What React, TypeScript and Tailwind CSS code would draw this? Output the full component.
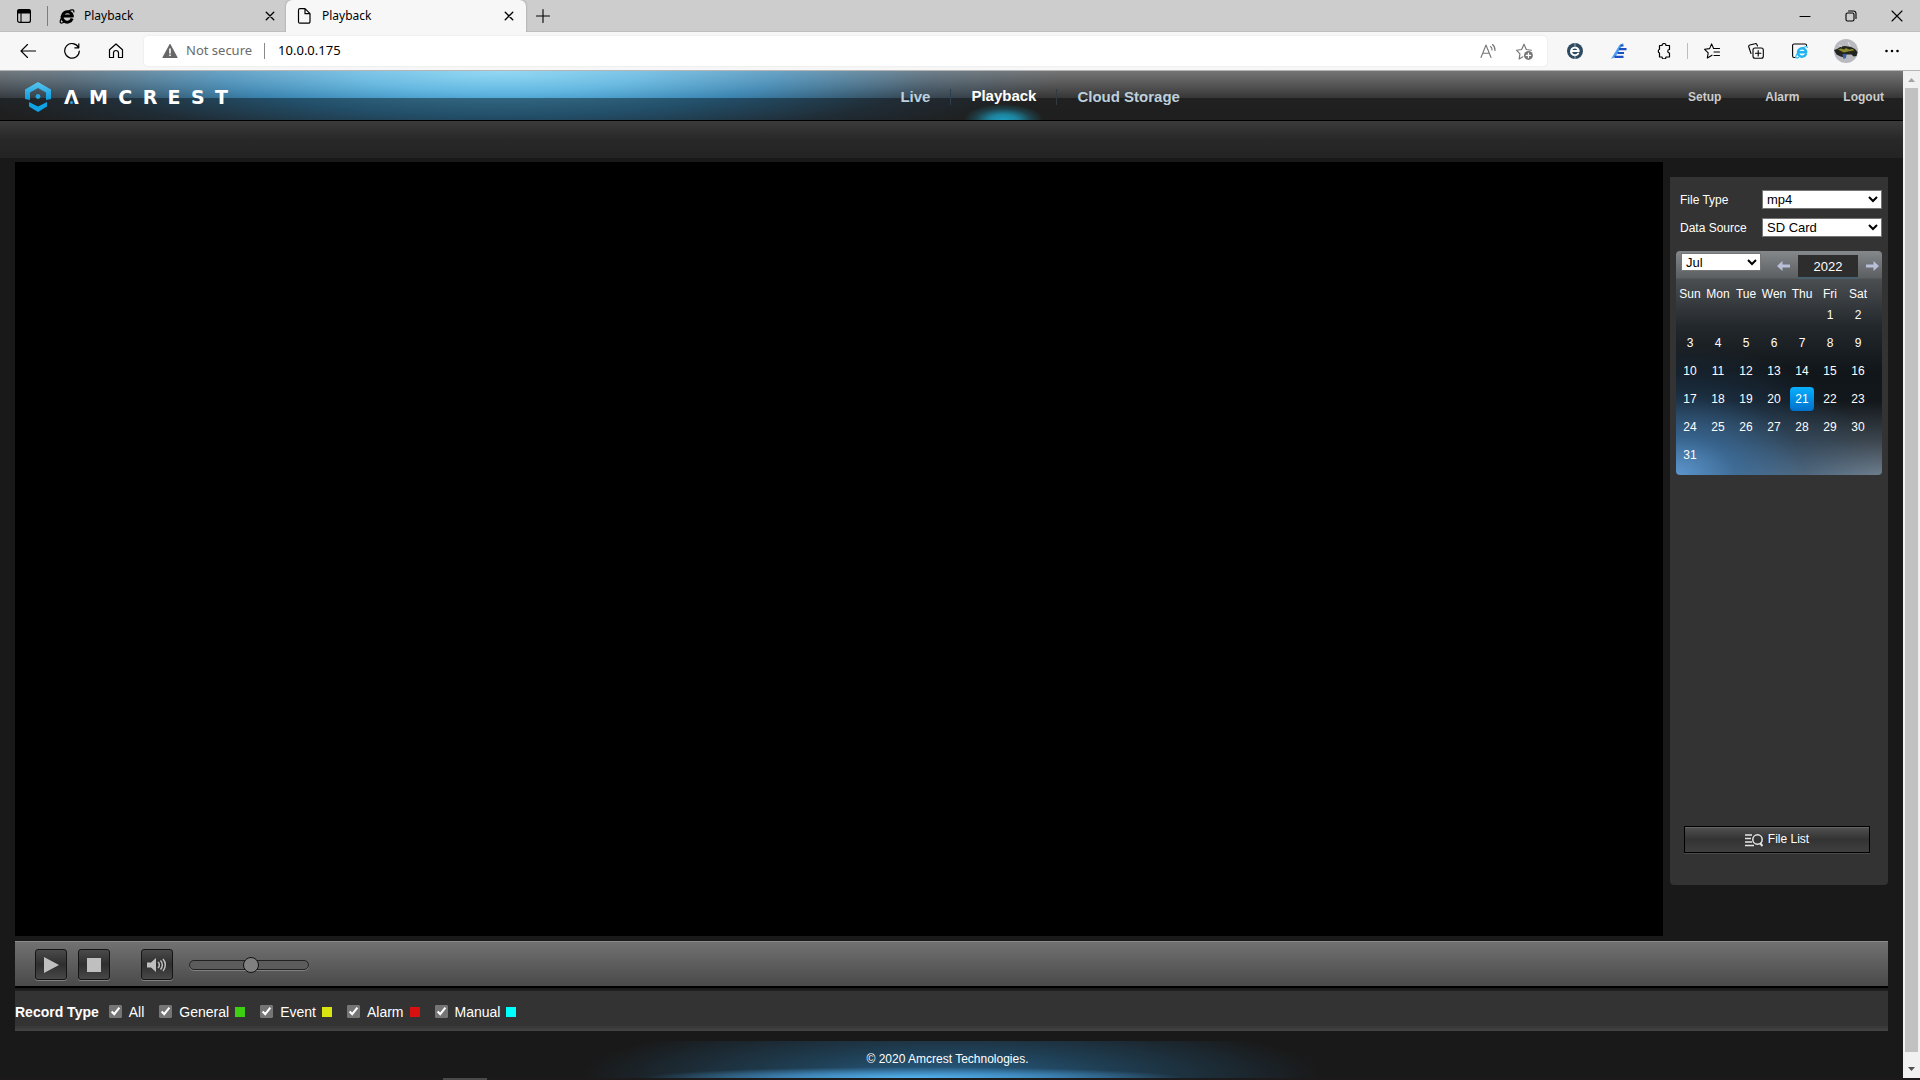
import React from 'react';

const WEEKDAYS = ['Sun', 'Mon', 'Tue', 'Wen', 'Thu', 'Fri', 'Sat'];

// July starts on a Friday
const WEEKS: (number | null)[][] = Array.from({ length: 6 }, (_, w) =>
  Array.from({ length: 7 }, (_, d) => {
    const day = w * 7 + d - 4;
    return day >= 1 && day <= 31 ? day : null;
  })
);

const RECORD_TYPES = [
  { id: 'general', label: 'General', swatch: 'bg-[#3fcf12]' },
  { id: 'event', label: 'Event', swatch: 'bg-[#d9e510]' },
  { id: 'alarm', label: 'Alarm', swatch: 'bg-[#d81010]' },
  { id: 'manual', label: 'Manual', swatch: 'bg-[#00ffff]' },
];

function Icon({ size = 16, className = '', children }: { size?: number; className?: string; children: React.ReactNode }) {
  return (
    <svg width={size} height={size} viewBox="0 0 16 16" fill="none" stroke="currentColor" strokeWidth="1.1" strokeLinecap="round" strokeLinejoin="round" className={`shrink-0 ${className}`} aria-hidden="true">
      {children}
    </svg>
  );
}

function CloseIcon() {
  return (
    <Icon size={10}>
      <path d="M2 2l12 12M14 2L2 14" strokeWidth="2.2" />
    </Icon>
  );
}

function TabStrip() {
  return (
    <div className="flex h-8 items-center bg-[#cdcdcd] text-xs text-black shadow-[inset_0_-1px_0_#bfbfbf]">
      <button aria-label="Tab actions" className="ml-4 flex">
        <Icon>
          <rect x="1.6" y="1.6" width="12.8" height="12.8" rx="2" strokeWidth="1.2" />
          <path d="M2 2h12v3H2z" fill="currentColor" />
          <path d="M5 5v9" />
        </Icon>
      </button>
      <div className="ml-[15px] h-5 w-px bg-[#7c7c7c]" />
      <div className="flex h-full w-[238px] items-center pr-[11px] pl-[11px]">
        <Icon>
          <path d="M13.2 10.6A5.2 5.2 0 1 1 13.4 8H4.5" strokeWidth="3" strokeLinecap="butt" />
          <path d="M14.8 4c.6-2.4-2-2.8-5.5-.8M2.8 9.5C.6 12.8.6 15.4 3 15c1-.2 2-.8 3-1.500" strokeWidth="1.2" />
        </Icon>
        <span className="ml-[9px] flex-1">Playback</span>
        <button aria-label="Close tab"><CloseIcon /></button>
      </div>
      <div className="flex h-full w-[240px] items-center rounded-t-md bg-[#f7f7f7] pr-3 pl-[10px] shadow-[0_0_2px_#888]">
        <Icon>
          <path d="M2.5 2.2a1.500 1.500 0 0 1 1.500-1.500h5l5 5v8a1.500 1.500 0 0 1-1.500 1.500H4a1.500 1.500 0 0 1-1.500-1.500zM9 .8V5.700h5" strokeWidth="1.2" />
        </Icon>
        <span className="ml-[10px] flex-1">Playback</span>
        <button aria-label="Close tab"><CloseIcon /></button>
      </div>
      <button aria-label="New tab" className="ml-[9px] flex">
        <Icon><path d="M8 1.5v13M1.5 8h13" /></Icon>
      </button>
      <div className="ml-auto flex items-center gap-[30px] pr-[15px]">
        <button aria-label="Minimize"><Icon><path d="M3 8.5h10" /></Icon></button>
        <button aria-label="Restore">
          <Icon>
            <rect x="3" y="5" width="8" height="8" rx="1.5" />
            <path d="M5.5 3h5A2.500 2.500 0 0 1 13 5.500v5" />
          </Icon>
        </button>
        <button aria-label="Close"><Icon><path d="M3 3l10 10M13 3L3 13" /></Icon></button>
      </div>
    </div>
  );
}

function Toolbar() {
  return (
    <div className="flex h-[38px] items-center bg-[#f7f7f7] text-[13px] text-black">
      <div className="flex w-36 items-center gap-7 pl-5">
        <button aria-label="Back"><Icon><path d="M7.5 1.5L1 8l6.500 6.500M1 8h15" /></Icon></button>
        <button aria-label="Refresh">
          <Icon>
            <path d="M14.5 4.5A7.300 7.300 0 1 0 15.300 8M14.800.8v4h-4" strokeWidth="1.2" />
          </Icon>
        </button>
        <button aria-label="Home">
          <Icon>
            <path d="M1.5 6.8L8 1l6.500 5.800v7.700h-4V10a2.500 2.500 0 0 0-5 0v4.500h-4z" strokeWidth="1.2" />
          </Icon>
        </button>
      </div>
      <div className="flex h-[30px] flex-1 items-center rounded bg-white pr-[14px] pl-[18px] shadow-[0_0_2px_#ddd]">
        <Icon className="text-[#666]">
          <path d="M8 1.5l7 13H1z" fill="currentColor" />
          <path d="M8 6v4M8 12v.5" stroke="#fff" strokeWidth="1.6" />
        </Icon>
        <span className="ml-2 text-[#6b6b6b]">Not secure</span>
        <div className="mr-[13px] ml-3 h-4 w-px bg-[#8a8a8a]" />
        <input aria-label="Address" defaultValue="10.0.0.175" className="min-w-0 flex-1 bg-transparent outline-none" />
        <div className="flex gap-5 text-[#767676]">
          <button aria-label="Read aloud">
            <Icon>
              <path d="M1 14.500L6 2l5 12.500M2.700 10.200h6.600M10.500 3.500a4 4 0 0 1 1.500 3.500M12.500 1.500a7 7 0 0 1 2.500 6" />
            </Icon>
          </button>
          <button aria-label="Add to favorites">
            <Icon size={17}>
              <path d="M6.500 13L3 15l.7-4.700L.5 6.800l4.800-.7L7.500 1.200l2.200 4.900 4.800.7" />
              <circle cx="11.700" cy="11.700" r="4.200" fill="currentColor" stroke="none" />
              <path d="M11.700 9.600v4.200M9.600 11.700h4.200" stroke="#fff" />
            </Icon>
          </button>
        </div>
      </div>
      <div className="flex items-center pl-5">
        <button aria-label="Extension">
          <Icon className="text-[#2d4a60]">
            <circle cx="8" cy="8" r="8" fill="currentColor" stroke="none" />
            <path d="M11.200 10.500A3.900 3.900 0 1 1 11.800 8H5.500" stroke="#fff" strokeWidth="2" />
            <path d="M8 0v3M8 13v3" stroke="#8fa3b3" />
          </Icon>
        </button>
        <button aria-label="Editor extension" className="ml-7">
          <Icon>
            <path d="M0 16L8.500 2 12.500 0 4.500 14z" fill="#4a9df0" stroke="none" />
            <path d="M9.500 2.500h3M8 6.200h7.500M6.500 10H13M3.500 13.800h9" stroke="#1d4fc0" strokeWidth="2.200" strokeLinecap="butt" />
          </Icon>
        </button>
        <button aria-label="Extensions" className="ml-7">
          <Icon>
            <path d="M4.500 2.500H7a2 2 0 0 1 4 0h3.500V6.500a1.700 1.700 0 0 0 0 3.500v4H11a2 2 0 0 1-4 0H4.500V10a2 2 0 0 1 0-3.700z" strokeWidth="1.2" />
          </Icon>
        </button>
        <div className="ml-4 h-4 w-px bg-[#bdbdbd]" />
        <button aria-label="Favorites" className="ml-4">
          <Icon>
            <path d="M9.500 5.500h6M10 9h5.500M10 12.500h5.500M8 12.200L3.300 15l.9-5.200L.6 6.300l5-.7L7.600.9l2 4.600" />
          </Icon>
        </button>
        <button aria-label="Collections" className="ml-7">
          <Icon>
            <path d="M3 10.500L.8 4A1.500 1.500 0 0 1 1.800 2L7 .7a1.500 1.500 0 0 1 2 1L9.500 3" />
            <rect x="5" y="5" width="10.300" height="10.300" rx="2" />
            <path d="M10.200 7.500v5.400M7.500 10.200h5.400" />
          </Icon>
        </button>
        <button aria-label="Internet Explorer mode" className="ml-7">
          <Icon>
            <path d="M3 14.500H2A1.500 1.500 0 0 1 .6 13V2.500A1.500 1.500 0 0 1 2.100 1h11a1.500 1.500 0 0 1 1.500 1.500" />
            <path d="M13.800 11.500a4.200 4.200 0 1 1 .5-2.300H6.500" stroke="#1eb4f0" strokeWidth="2.400" />
            <path d="M15.300 4.500c0-1.500-3-.8-5 .7M5 11c-2 3-1.500 5 1.500 3.500" stroke="#1eb4f0" />
          </Icon>
        </button>
        <button aria-label="Profile" className="ml-[26px]">
          <svg width="24" height="24" viewBox="0 0 24 24" aria-hidden="true">
            <circle cx="12" cy="12" r="12" fill="#b9bac0" />
            <path d="M0 11l3-1 4-2.500 4-.5 6 1 4 2 2.500 3-1 4-3 .5-2-2h-5l-2 3-4-1-4-2z" fill="#25251f" />
            <path d="M4 10.500l3-1 3 1 2-1.500 3 1.500 4-.5 1 1.500-6 1-4 1-3-1.500z" fill="#8b8a2c" />
            <path d="M8.500 15h4l-.5 4-2.500 1z" fill="#3862a5" />
            <path d="M14 3l2 4M5 6l3 2" stroke="#e6e6ea" />
          </svg>
        </button>
        <button aria-label="Settings and more" className="mr-5 ml-[26px]">
          <Icon>
            <path d="M2.500 8h.01M8 8h.01M13.500 8h.01" strokeWidth="2.600" />
          </Icon>
        </button>
      </div>
    </div>
  );
}

function Logo() {
  return (
    <a href="#home" aria-label="AMCREST" className="flex items-center gap-3 text-white">
      <svg width="28" height="32" viewBox="0 0 28 32" aria-hidden="true">
        <defs>
          <linearGradient id="hex" x1="0" y1="0" x2="0" y2="1">
            <stop offset="0" stopColor="#5cc4ee" />
            <stop offset="1" stopColor="#0a9ce0" />
          </linearGradient>
        </defs>
        <path d="M14 1l13 7.500V18l-5 1v-7.500L14 7l-8 4.500V19l-5-1V8.500z" fill="url(#hex)" />
        <path d="M5 21l9 4.500 9-4.500v4.500L14 31l-9-5.500z" fill="#0fa2e4" />
        <circle cx="14" cy="15.500" r="2.400" fill="#1fa9e6" />
      </svg>
      <span className="relative flex w-[164px] justify-between font-['DejaVu_Sans'] text-[19px] leading-6 font-bold">
        {['Λ', 'M', 'C', 'R', 'E', 'S', 'T'].map((c) => (
          <span key={c}>{c}</span>
        ))}
        <span className="absolute bottom-[5px] left-[6px] size-[3px] rounded-full bg-[#1fa9e6]" />
      </span>
    </a>
  );
}

function Header() {
  return (
    <header className="flex h-[50px] items-center border-b border-black bg-[linear-gradient(#ffffff3a_0px,#ffffff00_27px,#00000066_27px,#00000066_50px),radial-gradient(560px_90px_at_500px_0px,#74cdf0_0%,#58b2de_25%,#3a8fc2dd_50%,#356f9a55_78%,transparent_100%),linear-gradient(#4c4c4c_0px,#363636_27px,#333_50px)] pt-[2px]">
      <div className="w-[46%] pl-6">
        <Logo />
      </div>
      <nav className="flex h-full items-center pl-[5px] text-[15px] font-bold text-[#bdd0dc]">
        <a href="#live" className="border-r border-[#2c3f50] px-5 leading-4">Live</a>
        <a href="#playback" className="flex h-full items-center bg-[radial-gradient(40px_16px_at_50%_100%,#1c9cbd_0%,#1c9cbdcc_35%,#1c9cbd44_70%,transparent_100%)] px-5 text-white">Playback</a>
        <a href="#cloud" className="border-l border-[#34393f] px-5 leading-4">Cloud Storage</a>
      </nav>
      <div className="ml-auto flex gap-11 pr-[19px] text-xs font-bold text-[#cccccc]">
        <a href="#setup">Setup</a>
        <a href="#alarm">Alarm</a>
        <a href="#logout">Logout</a>
      </div>
    </header>
  );
}

function Arrow({ flip = false }: { flip?: boolean }) {
  return (
    <svg width="13" height="10" viewBox="0 0 13 10" fill="#b9bfd8" aria-hidden="true">
      <path d={flip ? 'M13 5L7.500 0v3.500H0v3h7.500V10z' : 'M0 5l5.500-5v3.500H13v3H5.500V10z'} />
    </svg>
  );
}

function Calendar() {
  return (
    <div className="mt-[14px] w-[206px] rounded bg-[radial-gradient(200px_130px_at_0%_100%,#5c95cc_0%,#35699acc_30%,#24486a66_65%,transparent_100%),linear-gradient(#85888b_0px,#5b5f62_27px,#4b4f52_28px,#23282c_75px,#11161a_120px,#12171b_150px,#3c464f_190px,#6c7d8d_224px)] pb-[6px]">
      <div className="flex h-7 items-start pl-[5px]">
        <select aria-label="Month" defaultValue="Jul" className="mt-[2px] h-[18px] w-20 border border-[#767676] bg-white text-[13px] text-black">
          <option>Jul</option>
        </select>
        <button aria-label="Previous year" className="mt-[10px] ml-4"><Arrow /></button>
        <input aria-label="Year" defaultValue="2022" className="mt-1 ml-2 h-6 w-[60px] border-b-2 border-[#46606f] bg-[#2d2d2d] pt-px text-center text-[13px] text-white" />
        <button aria-label="Next year" className="mt-[10px] ml-2"><Arrow flip /></button>
      </div>
      <table className="w-[196px] table-fixed text-center text-xs">
        <thead>
          <tr>
            {WEEKDAYS.map((d) => (
              <th key={d} className="h-[22px] p-0 pt-[6px] align-bottom leading-[14px] font-normal">{d}</th>
            ))}
          </tr>
        </thead>
        <tbody>
          {WEEKS.map((week, i) => (
            <tr key={i}>
              {week.map((day, j) => (
                <td key={j} className="h-7 p-0">
                  {day && (
                    <button className={day === 21 ? 'size-6 rounded bg-linear-to-b from-[#0cb0ff] to-[#0071cc]' : 'size-6'}>{day}</button>
                  )}
                </td>
              ))}
            </tr>
          ))}
        </tbody>
      </table>
    </div>
  );
}

function SidePanel() {
  return (
    <aside className="mt-[15px] mb-[51px] flex w-[218px] shrink-0 flex-col rounded-b bg-[#333] pt-[13px] pl-[6px] text-xs text-white">
      <div className="flex h-[19px] items-center pl-1">
        <label htmlFor="file-type" className="w-[82px]">File Type</label>
        <select id="file-type" defaultValue="mp4" className="h-[19px] w-[120px] border border-[#767676] bg-white text-[13px] text-black">
          <option>mp4</option>
        </select>
      </div>
      <div className="mt-[9px] flex h-[19px] items-center pl-1">
        <label htmlFor="data-source" className="w-[82px]">Data Source</label>
        <select id="data-source" defaultValue="SD Card" className="h-[19px] w-[120px] border border-[#767676] bg-white text-[13px] text-black">
          <option>SD Card</option>
        </select>
      </div>
      <Calendar />
      <button className="mt-auto mb-8 ml-2 flex h-[27px] w-[186px] items-center justify-center gap-[5px] border border-black bg-linear-to-b from-[#515151] via-[#333] to-[#404040] shadow-[inset_0_1px_0_#666,0_1px_0_#4a4a4a]">
        <svg width="18" height="14" viewBox="0 0 18 14" fill="none" stroke="#e6e6e6" strokeWidth="1.5" aria-hidden="true">
          <path d="M0 2h7M0 5.500h6M0 9h7M0 12.500h9" />
          <circle cx="12.500" cy="6.500" r="4.700" />
          <path d="M15 10l2.500 3" strokeWidth="2" />
        </svg>
        <span className="pb-px">File List</span>
      </button>
    </aside>
  );
}

const CONTROL_BUTTON =
  'flex h-[31px] w-8 items-center justify-center rounded-[3px] border border-[#151515] bg-linear-to-b from-[#4a4a4a] via-[#2f2f2f] to-[#484848] shadow-[0_1px_0_#808080]';

function Controls() {
  return (
    <div className="mt-[5px] flex h-[45px] items-center border-t border-[#8c8c8c] bg-linear-to-b from-[#717171] to-[#4a4a4a] pt-px pl-5">
      <button aria-label="Play" className={CONTROL_BUTTON}>
        <svg width="16" height="16" viewBox="0 0 16 16" fill="#bfbfbf" aria-hidden="true"><path d="M1 0l15 8-15 8z" /></svg>
      </button>
      <button aria-label="Stop" className={`ml-[11px] ${CONTROL_BUTTON}`}>
        <span className="size-[14px] bg-[#bfbfbf]" />
      </button>
      <button aria-label="Mute" className={`ml-[31px] ${CONTROL_BUTTON}`}>
        <svg width="20" height="14" viewBox="0 0 20 14" fill="none" stroke="#bfbfbf" strokeWidth="1.5" aria-hidden="true">
          <path d="M0 4.500h4L9 0v14L4 9.500H0z" fill="#bfbfbf" stroke="none" />
          <path d="M11 4a4 4 0 0 1 0 6M13.500 2.500a6.500 6.500 0 0 1 0 9M16 1a9 9 0 0 1 0 12" />
        </svg>
      </button>
      <input
        type="range"
        aria-label="Volume"
        defaultValue={52}
        className="ml-4 h-[10px] w-[120px] appearance-none rounded-full border border-[#222] bg-[#5c5c5c] shadow-[0_1px_0_#808080] [&::-webkit-slider-thumb]:size-4 [&::-webkit-slider-thumb]:appearance-none [&::-webkit-slider-thumb]:rounded-full [&::-webkit-slider-thumb]:border [&::-webkit-slider-thumb]:border-[#111] [&::-webkit-slider-thumb]:bg-[#808080]"
      />
    </div>
  );
}

function RecordTypes() {
  return (
    <div className="flex h-[45px] items-center border-t-2 border-black bg-[linear-gradient(#161616_0px,#222_3px,#333_3px,#333_37px,#444_43px)] pt-1 text-sm text-white">
      <span className="font-bold">Record Type</span>
      <label className="ml-[10px] flex items-center gap-[7px]">
        <input type="checkbox" defaultChecked className="size-[13px] accent-[#757575]" />
        All
      </label>
      {RECORD_TYPES.map((t) => (
        <label key={t.id} className="ml-[15px] flex items-center">
          <input type="checkbox" defaultChecked className="size-[13px] accent-[#757575]" />
          <span className="ml-[7px]">{t.label}</span>
          <span className={`ml-[6px] size-[10px] ${t.swatch}`} />
        </label>
      ))}
    </div>
  );
}

function Scrollbar() {
  return (
    <div className="flex w-[17px] shrink-0 flex-col items-center bg-[#f1f1f1]" aria-hidden="true">
      <svg width="17" height="17" viewBox="0 0 17 17" fill="#a3a3a3"><path d="M5 11l3.500-4 3.500 4z" /></svg>
      <div className="w-[13px] flex-1 bg-[#c1c1c1]" />
      <svg width="17" height="26" viewBox="0 0 17 26" fill="#505050"><path d="M5 15l3.500 4 3.500-4z" /></svg>
    </div>
  );
}

export default function App() {
  return (
    <div className="flex min-h-screen flex-col bg-[#1c1a1b] font-['Noto_Sans',sans-serif]">
      <TabStrip />
      <Toolbar />
      <div className="flex flex-1 border-t border-[#b5b5b5]">
        <div className="flex min-w-0 flex-1 flex-col bg-[#191919] font-['Liberation_Sans',Arial,sans-serif]">
          <Header />
          <div className="h-[37px] bg-linear-to-b from-[#3b3b3b] via-[#282828] to-[#232323]" />
          <main className="flex flex-1 flex-col px-[15px] pt-1">
            <div className="flex flex-1 gap-[7px]">
              <div className="min-w-0 flex-1 bg-black" />
              <SidePanel />
            </div>
            <Controls />
            <RecordTypes />
          </main>
          <footer className="mt-[10px] flex h-[37px] items-center justify-center bg-[radial-gradient(270px_11px_at_48%_100%,#55b4f0_0%,#4aa0dcaa_50%,transparent_100%),radial-gradient(370px_64px_at_50%_100%,#28618a_0%,#22506faa_45%,transparent_100%)] pb-[2px] text-xs text-white">
            <span className="pr-2">© 2020 Amcrest Technologies.</span>
          </footer>
        </div>
        <Scrollbar />
      </div>
      <div className="h-[2px] bg-[#1c1a1b] pl-[443px]">
        <div className="h-full w-11 bg-[#4a4a4a]" />
      </div>
    </div>
  );
}
